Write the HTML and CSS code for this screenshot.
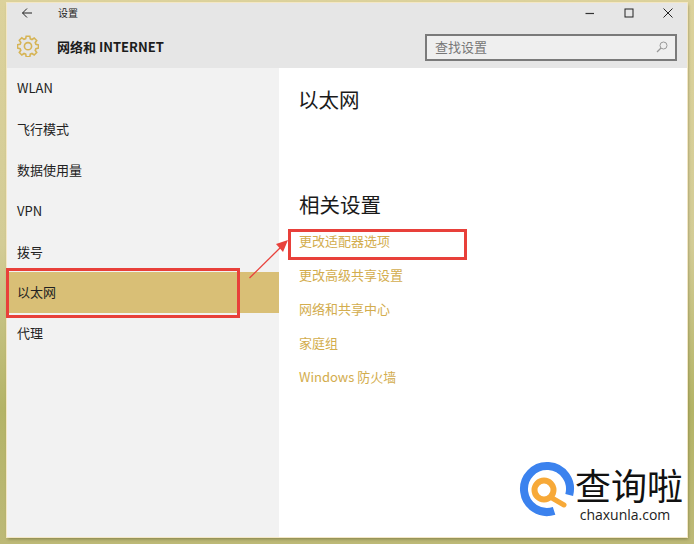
FILE: index.html
```html
<!DOCTYPE html>
<html lang="zh-CN">
<head>
    <meta charset="UTF-8">
    <title>设置</title>
    <link rel="stylesheet" href="styles.css">
</head>
<body>

<div class="desktop">
    <div class="window">
        <!-- Title bar -->
        <div class="title-bar">
            <svg class="back-icon" width="12" height="12" viewBox="0 0 12 12">
                <path d="M11 6H1.5M6 1.5L1.5 6L6 10.5" fill="none" stroke="#222" stroke-width="1"/>
            </svg>
            <span class="title-text">设置</span>
            <div class="win-controls">
                <svg width="10" height="10" viewBox="0 0 10 10"><path d="M0.5 5.5H9" stroke="#333" stroke-width="1.2"/></svg>
                <svg width="10" height="10" viewBox="0 0 10 10"><rect x="1" y="1" width="8" height="8" fill="none" stroke="#222" stroke-width="1"/></svg>
                <svg width="10" height="10" viewBox="0 0 10 10"><path d="M0.5 0.5L9.5 9.5M9.5 0.5L0.5 9.5" stroke="#222" stroke-width="1"/></svg>
            </div>
        </div>

        <!-- Header -->
        <div class="header">
            <svg class="gear-icon" width="22" height="22" viewBox="0 0 22 22">
                <path d="M9.2 1.2h3.6l.5 2.6 1.7.7 2.2-1.5 2.5 2.5-1.5 2.2.7 1.7 2.6.5v3.2l-2.6.5-.7 1.7 1.5 2.2-2.5 2.5-2.2-1.5-1.7.7-.5 2.6H9.2l-.5-2.6-1.7-.7-2.2 1.5-2.5-2.5 1.5-2.2-.7-1.7-2.6-.5V9.7l2.6-.5.7-1.7-1.5-2.2 2.5-2.5L7 4.3l1.7-.7z" fill="none" stroke="#d6b455" stroke-width="1.6"/>
                <circle cx="11" cy="11.2" r="3.6" fill="none" stroke="#d6b455" stroke-width="1.6"/>
            </svg>
            <span class="header-title">网络和 INTERNET</span>
            <div class="search-box">
                <span class="search-text">查找设置</span>
                <svg width="12" height="12" viewBox="0 0 12 12">
                    <circle cx="7.5" cy="4.5" r="3.5" fill="none" stroke="#999" stroke-width="1"/>
                    <path d="M5 7L1 11" stroke="#999" stroke-width="1.2"/>
                </svg>
            </div>
        </div>

        <div class="content">
            <!-- Sidebar -->
            <div class="sidebar">
                <div class="nav-item">WLAN</div>
                <div class="nav-item">飞行模式</div>
                <div class="nav-item">数据使用量</div>
                <div class="nav-item">VPN</div>
                <div class="nav-item">拨号</div>
                <div class="nav-item active">以太网</div>
                <div class="nav-item">代理</div>
            </div>

            <!-- Main panel -->
            <div class="main">
                <h2 class="page-title">以太网</h2>
                <h2 class="section-title">相关设置</h2>
                <a href="#" class="link">更改适配器选项</a>
                <a href="#" class="link">更改高级共享设置</a>
                <a href="#" class="link">网络和共享中心</a>
                <a href="#" class="link">家庭组</a>
                <a href="#" class="link">Windows 防火墙</a>
            </div>
        </div>
    </div>

    <!-- Red annotations -->
    <div class="mark mark-nav"></div>
    <div class="mark mark-link"></div>
    <svg class="mark-arrow" width="44" height="44" viewBox="0 0 44 44">
        <path d="M0.5 43L32 12" stroke="#e8423c" stroke-width="1.3"/>
        <path d="M39 5L34 17L27 9z" fill="#e8423c"/>
    </svg>

    <!-- Watermark -->
    <div class="watermark">
        <svg width="56" height="56" viewBox="0 0 56 56">
            <path d="M35.1 49.9A23 23 0 1 1 50.2 34" fill="none" stroke="#3b82ee" stroke-width="8"/>
            <circle cx="25" cy="29" r="9.5" fill="none" stroke="#f7a938" stroke-width="6"/>
            <path d="M33 37L45 44" stroke="#f7a938" stroke-width="5" stroke-linecap="round"/>
        </svg>
        <div class="wm-text">
            <div class="wm-name">查询啦</div>
            <div class="wm-url">chaxunla.com</div>
        </div>
    </div>
</div>

</body>
</html>
```

FILE: styles.css
```css
/* General Reset */
* {
    margin: 0;
    padding: 0;
    box-sizing: border-box;
}

html, body {
    width: 694px;
    height: 544px;
    overflow: hidden;
}

body {
    font-family: "Noto Sans CJK SC", "Liberation Sans", sans-serif;
    color: #222;
}

.desktop {
    position: relative;
    width: 694px;
    height: 544px;
    padding: 3px 7px 7px 7px;
    background: linear-gradient(180deg, #dcd29c 0%, #d3cc96 45%, #b4b467 75%, #bdb977 100%);
}

.window {
    display: flex;
    flex-direction: column;
    height: 100%;
    background: #fff;
    box-shadow: 0 0 0 1px #f4e7c4, 1px 2px 3px rgba(60, 60, 20, 0.45);
}

.title-bar {
    display: flex;
    align-items: center;
    height: 21px;
    padding-bottom: 2px;
    background: #e6e6e6;
}

.back-icon {
    margin-left: 14px;
}

.title-text {
    margin-left: 25px;
    font-size: 10px;
}

.win-controls {
    display: flex;
    align-items: center;
    gap: 29px;
    margin-left: auto;
    margin-right: 14px;
}

.header {
    display: flex;
    align-items: center;
    height: 44px;
    background: #e6e6e6;
}

.gear-icon {
    margin-left: 10px;
}

.header-title {
    margin-left: 18px;
    font-size: 13px;
    font-weight: 700;
    color: #1c1c1c;
}

.search-box {
    display: flex;
    align-items: center;
    justify-content: space-between;
    width: 252px;
    height: 27px;
    margin-left: auto;
    margin-right: 10px;
    margin-top: 3px;
    padding: 0 7px 2px 8px;
    background: #efefef;
    border: 2px solid #7a7a7a;
}

.search-text {
    font-size: 13px;
    color: #777;
}

.content {
    display: flex;
    flex: 1;
    min-height: 0;
}

.sidebar {
    width: 272px;
    background: #f2f2f2;
}

.nav-item {
    display: flex;
    align-items: center;
    height: 40.8px;
    padding-left: 10px;
    padding-bottom: 1px;
    font-size: 13px;
    color: #222;
}

.nav-item.active {
    background: #d9bf76;
}

.main {
    display: flex;
    flex-direction: column;
    align-items: flex-start;
    flex: 1;
    padding-left: 20px;
}

.page-title,
.section-title {
    font-size: 20.5px;
    font-weight: 400;
    line-height: 28px;
    color: #1a1a1a;
}

.page-title {
    margin-top: 17px;
    margin-left: -1px;
}

.section-title {
    margin-top: 77px;
    margin-bottom: 6px;
}

.link {
    display: block;
    height: 34px;
    font-size: 13px;
    line-height: 34px;
    color: #d3ad4e;
    text-decoration: none;
}

.mark {
    position: absolute;
    border: 3px solid #e8403a;
}

.mark-nav {
    left: 6px;
    top: 268px;
    width: 234px;
    height: 50px;
}

.mark-link {
    left: 288px;
    top: 229px;
    width: 179px;
    height: 31px;
}

.mark-arrow {
    position: absolute;
    left: 249px;
    top: 235px;
}

.watermark {
    position: absolute;
    left: 519px;
    top: 461px;
    display: flex;
    align-items: flex-start;
}

.wm-text {
    text-align: center;
}

.wm-name {
    height: 40px;
    margin-top: 3px;
    font-size: 36px;
    line-height: 40px;
    color: #111;
    white-space: nowrap;
}

.wm-url {
    margin-top: 3px;
    margin-left: -8px;
    font-family: "Open Sans", "Liberation Sans", sans-serif;
    font-size: 14px;
    line-height: 16px;
    color: #222;
}
```
